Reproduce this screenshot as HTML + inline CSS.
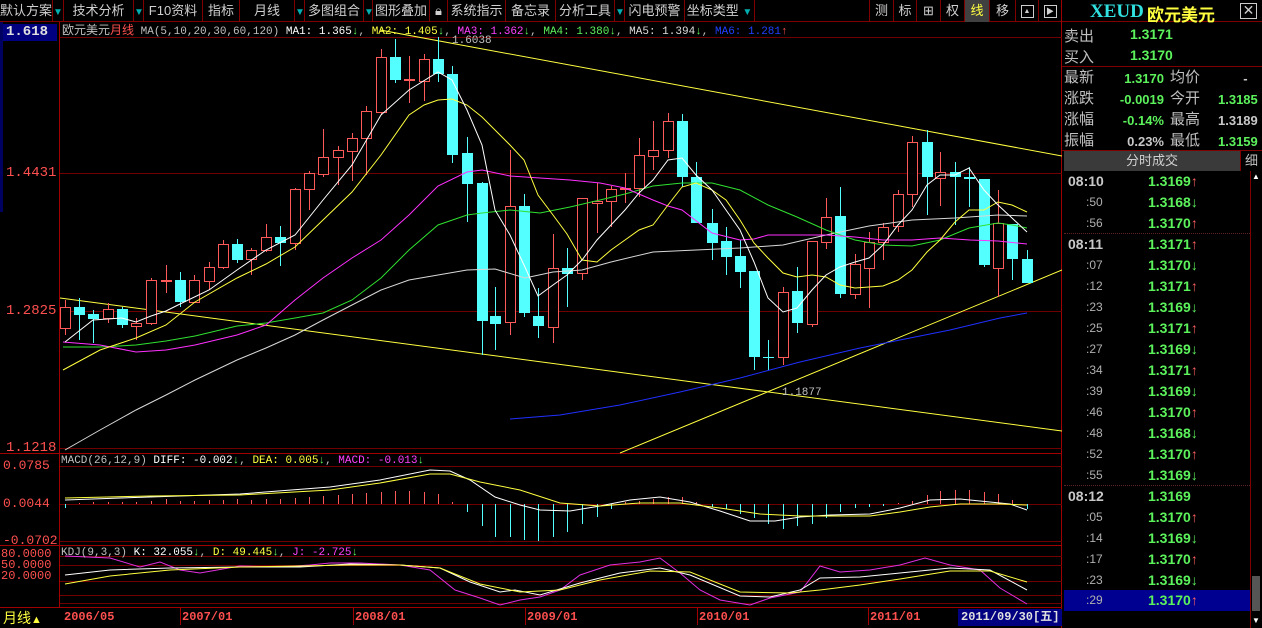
<!DOCTYPE html>
<html><head><meta charset="utf-8"><style>
*{margin:0;padding:0;box-sizing:border-box}
body{width:1262px;height:628px;background:#000;overflow:hidden;position:relative;font-family:"Liberation Sans","Noto Sans CJK SC",sans-serif;color:#c0c0c0}
.a{position:absolute;white-space:nowrap}
.tb{position:absolute;top:0;height:22px;font-size:13px;line-height:22px;color:#d0d0d0;text-align:center;border-right:1px solid #800000}
.tri{color:#00b0b0;font-size:10px}
.m{font-family:"Liberation Mono","Noto Sans CJK SC",monospace}
.g{color:#5cf25c}
.r{color:#ff5050}
.row{position:absolute;left:1064px;width:186px;height:21px;font-size:14px;line-height:21px}
.row .t{position:absolute;left:4px;width:50px;color:#c8c8c8;font-weight:bold}
.row .ts{position:absolute;left:22px;color:#b0b0b0;font-size:12px}
.row .v{position:absolute;left:84px;color:#5cf25c;font-weight:bold;font-size:14px}
.up{color:#ff6060;font-weight:bold}
.dn{color:#5cf25c;font-weight:bold}
</style></head><body>
<!-- toolbar -->
<div class="a" style="left:0;top:0;width:1062px;height:22px;border-bottom:1px solid #800000"></div>
<div class="tb" style="left:0;width:53px">默认方案</div>
<div class="tb" style="left:53px;width:11px"><span class="tri">▼</span></div>
<div class="tb" style="left:64px;width:70px">技术分析</div>
<div class="tb" style="left:134px;width:10px"><span class="tri">▼</span></div>
<div class="tb" style="left:144px;width:59px">F10资料</div>
<div class="tb" style="left:203px;width:37px">指标</div>
<div class="tb" style="left:240px;width:55px">月线</div>
<div class="tb" style="left:295px;width:10px"><span class="tri">▼</span></div>
<div class="tb" style="left:305px;width:59px">多图组合</div>
<div class="tb" style="left:364px;width:9px"><span class="tri">▼</span></div>
<div class="tb" style="left:373px;width:57px">图形叠加</div>
<div class="tb" style="left:430px;width:18px">🔒︎</div>
<div class="tb" style="left:448px;width:58px">系统指示</div>
<div class="tb" style="left:506px;width:50px">备忘录</div>
<div class="tb" style="left:556px;width:59px">分析工具</div>
<div class="tb" style="left:615px;width:10px"><span class="tri">▼</span></div>
<div class="tb" style="left:625px;width:60px">闪电预警</div>
<div class="tb" style="left:685px;width:70px">坐标类型 <span class="tri">▼</span></div>
<div class="tb" style="left:755px;width:115px"></div>
<div class="tb" style="left:870px;width:24px">测</div>
<div class="tb" style="left:894px;width:23px">标</div>
<div class="tb" style="left:917px;width:24px">⊞</div>
<div class="tb" style="left:941px;width:24px">权</div>
<div class="tb" style="left:965px;width:25px;background:#404040;color:#ffff40">线</div>
<div class="tb" style="left:990px;width:26px">移</div>
<div class="tb" style="left:1016px;width:23px"><span style="display:inline-block;width:13px;height:13px;border:1px solid #ccc;vertical-align:middle;font-size:7px;line-height:11px">▲</span></div>
<div class="tb" style="left:1039px;width:23px"><span style="display:inline-block;width:13px;height:13px;border:1px solid #ccc;vertical-align:middle;font-size:8px;line-height:11px">▶</span></div>

<svg class="a" style="left:0;top:0" width="1062" height="628" id="sv">
<rect x="0" y="22" width="3" height="190" fill="#000060"/>
<line x1="59.5" y1="22" x2="59.5" y2="608" stroke="#a00000"/>
<line x1="1061.5" y1="0" x2="1061.5" y2="628" stroke="#a00000"/>
<line x1="0" y1="453.5" x2="1062" y2="453.5" stroke="#a00000"/>
<line x1="0" y1="545.5" x2="1062" y2="545.5" stroke="#a00000"/>
<line x1="0" y1="607.5" x2="1062" y2="607.5" stroke="#a00000"/>
<g stroke="#700000" stroke-width="1">
<line x1="60" y1="37.5" x2="1062" y2="37.5"/>
<line x1="60" y1="173.5" x2="1062" y2="173.5"/>
<line x1="60" y1="311.5" x2="1062" y2="311.5"/>
<line x1="60" y1="448.5" x2="1062" y2="448.5"/>
<line x1="60" y1="466.5" x2="1062" y2="466.5"/>
<line x1="60" y1="504.5" x2="1062" y2="504.5"/>
<line x1="60" y1="541.5" x2="1062" y2="541.5"/>
<line x1="60" y1="556.5" x2="1062" y2="556.5"/>
<line x1="60" y1="565.5" x2="1062" y2="565.5"/>
<line x1="60" y1="581.5" x2="1062" y2="581.5"/>
<line x1="60" y1="595.5" x2="1062" y2="595.5"/>
<line x1="60" y1="603.5" x2="1062" y2="603.5"/>
</g>
<g stroke="#ffff40" stroke-width="1" fill="none">
<line x1="380" y1="30" x2="1062" y2="156"/>
<line x1="60" y1="298" x2="1062" y2="431"/>
<line x1="620" y1="453" x2="1062" y2="270"/>
</g>
<g id="cand"></g>
<g id="lines" fill="none" stroke-width="1"></g>
</svg>

<!-- axis labels -->
<div class="a m" style="left:3px;top:24px;width:54px;height:17px;background:#000080;color:#e0e0e0;font-size:14px;line-height:17px;padding-left:3px;font-weight:bold">1.618</div>
<div class="a m r" style="left:6px;top:165px;font-size:14px">1.4431</div>
<div class="a m r" style="left:6px;top:303px;font-size:14px">1.2825</div>
<div class="a m r" style="left:6px;top:440px;font-size:14px">1.1218</div>
<div class="a m r" style="left:3px;top:458px;font-size:13px">0.0785</div>
<div class="a m r" style="left:3px;top:496px;font-size:13px">0.0044</div>
<div class="a m r" style="left:3px;top:533px;font-size:13px">-0.0702</div>
<div class="a m r" style="left:1px;top:549px;font-size:12px;line-height:11px">80.0000<br>50.0000<br>20.0000</div>
<div class="a" style="left:3px;top:608px;font-size:14px;color:#ffff40">月线<span style="font-size:11px">▲</span></div>
<div class="a m r" style="left:64px;top:610px;font-size:12px;font-weight:bold">2006/05</div>
<div class="a m r" style="left:182px;top:610px;font-size:12px;font-weight:bold">2007/01</div>
<div class="a m r" style="left:355px;top:610px;font-size:12px;font-weight:bold">2008/01</div>
<div class="a m r" style="left:527px;top:610px;font-size:12px;font-weight:bold">2009/01</div>
<div class="a m r" style="left:699px;top:610px;font-size:12px;font-weight:bold">2010/01</div>
<div class="a m r" style="left:870px;top:610px;font-size:12px;font-weight:bold">2011/01</div>
<div class="a m" style="left:958px;top:609px;width:104px;height:17px;background:#000080;color:#e0e0e0;font-size:12px;font-weight:bold;line-height:17px;padding-left:3px">2011/09/30[五]</div>
<div class="a" style="left:180px;top:608px;width:1px;height:17px;background:#a00000"></div>
<div class="a" style="left:353px;top:608px;width:1px;height:17px;background:#a00000"></div>
<div class="a" style="left:525px;top:608px;width:1px;height:17px;background:#a00000"></div>
<div class="a" style="left:697px;top:608px;width:1px;height:17px;background:#a00000"></div>
<div class="a" style="left:868px;top:608px;width:1px;height:17px;background:#a00000"></div>

<!-- chart headers -->
<div class="a m" style="left:62px;top:23px;font-size:11px;line-height:14px"><span style="color:#c0c0c0;font-family:'Liberation Sans','Noto Sans CJK SC',sans-serif;font-size:12px">欧元美元</span><span style="color:#ff5050;font-family:'Liberation Sans','Noto Sans CJK SC',sans-serif;font-size:12px">月线</span> MA(5,10,20,30,60,120) <span style="color:#fff">MA1: 1.365</span><span class="g">↓</span>, <span style="color:#ffff40">MA2: 1.405</span><span class="g">↓</span>, <span style="color:#ff40ff">MA3: 1.362</span><span class="g">↓</span>, <span class="g">MA4: 1.380↓</span>, <span style="color:#ddd">MA5: 1.394</span><span class="g">↓</span>, <span style="color:#2040ff">MA6: 1.281</span><span class="r">↑</span></div>
<div class="a m" style="left:452px;top:35px;font-size:11px;color:#c0c0c0">1.6038</div>
<div class="a m" style="left:782px;top:387px;font-size:11px;color:#c0c0c0">1.1877</div>
<div class="a m" style="left:61px;top:455px;font-size:11px;color:#c0c0c0">MACD(26,12,9) <span style="color:#fff">DIFF: -0.002</span><span class="g">↓</span>, <span style="color:#ffff40">DEA: 0.005</span><span class="g">↓</span>, <span style="color:#ff40ff">MACD: -0.013</span><span class="g">↓</span></div>
<div class="a m" style="left:61px;top:547px;font-size:11px;color:#c0c0c0">KDJ(9,3,3) <span style="color:#fff">K: 32.055</span><span class="g">↓</span>, <span style="color:#ffff40">D: 49.445</span><span class="g">↓</span>, <span style="color:#ff40ff">J: -2.725</span><span class="g">↓</span></div>

<!-- right panel -->
<div class="a" style="left:1062px;top:0;width:200px;height:22px;border-bottom:1px solid #800000"></div>
<div class="a" style="left:1090px;top:1px;font-size:19px;font-weight:bold;font-family:'Liberation Serif',serif;color:#30e0e0">XEUD</div>
<div class="a" style="left:1147px;top:1px;font-size:17px;font-weight:bold;color:#ffff40">欧元美元</div>
<div class="a" style="left:1240px;top:3px;width:17px;height:16px;border:1px solid #ccc;color:#ccc;font-size:14px;line-height:13px;text-align:center">✕</div>
<div class="a" style="left:1064px;top:25px;font-size:15px">卖出</div>
<div class="a" style="left:1130px;top:26px;font-size:14px;font-weight:bold" ><span class="g">1.3171</span></div>
<div class="a" style="left:1064px;top:46px;font-size:15px">买入</div>
<div class="a" style="left:1130px;top:47px;font-size:14px;font-weight:bold"><span class="g">1.3170</span></div>
<div class="a" style="left:1062px;top:66px;width:200px;height:1px;background:#800000"></div>
<div class="a" style="left:1064px;top:67px;font-size:15px;line-height:21px">最新<br>涨跌<br>涨幅<br>振幅</div>
<div class="a" style="left:1170px;top:67px;font-size:15px;line-height:21px">均价<br>今开<br>最高<br>最低</div>
<div class="a" style="left:1094px;top:68px;width:70px;text-align:right;font-size:13px;line-height:21px;font-weight:bold"><span class="g">1.3170</span><br><span class="g">-0.0019</span><br><span class="g">-0.14%</span><br><span style="color:#c8c8c8">0.23%</span></div>
<div class="a" style="left:1218px;top:68px;font-size:13px;line-height:21px;font-weight:bold"><span style="color:#c8c8c8">&nbsp; &nbsp; &nbsp; &nbsp;-</span><br><span class="g">1.3185</span><br><span style="color:#c8c8c8">1.3189</span><br><span class="g">1.3159</span></div>
<div class="a" style="left:1062px;top:150px;width:200px;height:1px;background:#800000"></div>
<div class="a" style="left:1064px;top:151px;width:176px;height:20px;background:#3a3a3a;font-size:13px;line-height:20px;text-align:center;color:#d0d0d0">分时成交</div>
<div class="a" style="left:1240px;top:151px;width:22px;height:20px;border-left:1px solid #800000;font-size:13px;line-height:20px;text-align:center">细</div>
<div class="a" style="left:1250px;top:171px;width:1px;height:457px;background:#800000"></div>
<div class="a" style="left:1252px;top:172px;width:9px;height:10px;color:#fff;font-size:8px;line-height:10px">▲</div>
<div class="a" style="left:1252px;top:576px;width:8px;height:35px;background:#555"></div>
<div class="a" style="left:1252px;top:616px;width:9px;height:10px;color:#fff;font-size:8px;line-height:10px">▼</div>
<div class="a" style="left:1064px;top:233px;width:186px;border-top:1px dotted #602020"></div>
<div class="a" style="left:1064px;top:485px;width:186px;border-top:1px dotted #602020"></div>
<div class="a" style="left:1064px;top:590px;width:186px;height:21px;background:#000090"></div>
<div id="list"></div>

<script>
var C=[[65,'r',307,328,300,335],[79,'c',307,315,298,340],[93,'c',314,319,310,343],[108,'r',309,318,303,323],[122,'c',309,325,307,328],[136,'r',323,326,318,340],[151,'r',280,323,278,325],[166,'r',280,281,265,293],[180,'c',280,302,272,307],[194,'r',280,302,275,303],[209,'r',267,281,262,290],[223,'r',244,267,240,269],[237,'c',244,260,239,263],[251,'r',250,259,248,275],[266,'r',237,250,224,252],[280,'c',237,243,226,266],[295,'r',189,243,188,250],[309,'r',173,189,171,210],[323,'r',157,174,129,177],[338,'r',150,157,146,185],[352,'r',138,151,133,181],[366,'r',111,138,106,175],[381,'r',57,112,49,115],[395,'c',57,80,39,83],[409,'r',79,80,56,103],[424,'r',59,81,54,101],[438,'c',59,74,37,82],[452,'c',74,155,66,163],[467,'c',153,184,137,222],[482,'c',183,321,182,355],[495,'c',316,324,287,350],[510,'r',206,322,150,335],[524,'c',206,313,194,317],[538,'c',316,326,288,338],[553,'r',268,327,234,343],
[567,'c',268,274,248,307],[582,'r',198,273,198,280],[597,'r',201,203,183,233],[611,'r',189,201,186,227],[625,'r',188,189,173,203],[639,'r',155,188,138,197],[653,'r',150,156,121,170],[668,'r',121,150,113,158],[682,'c',121,177,114,187],[696,'c',177,223,162,223],[712,'c',223,243,209,260],[726,'c',241,257,227,275],[740,'c',256,272,240,288],[754,'c',271,357,271,370],[768,'c',357,358,340,370],[783,'r',292,357,287,365],[797,'c',291,323,267,333],[812,'r',241,324,241,327],[826,'r',217,242,198,249],[840,'c',216,294,187,298],[855,'r',264,294,254,299],[869,'r',242,268,232,308],[883,'r',227,242,223,260],[898,'r',194,226,190,232],[912,'r',142,194,136,207],[927,'c',142,177,130,215],[940,'r',172,178,152,206],[955,'c',172,177,162,225],[969,'c',177,179,167,207],[984,'c',179,265,179,267],[998,'r',223,268,190,297],[1012,'c',224,259,224,280],[1027,'c',259,283,250,283]];
var M=[4,-1,-2,-2,-2,-2,-3,-5,-3,-3,-4,-4,-5,-4,-5,-5,-6,-7,-8,-9,-10,-11,-12,-13,-13,-12,-10,-2,8,22,33,33,36,37,33,28,20,13,5,-2,-3,-5,-7,-7,-2,3,5,10,14,20,25,22,20,14,8,4,3,2,-1,-3,-9,-13,-14,-14,-12,-10,-4,5];
var RED='#ff5a5a',CY='#54ffff',s='';
C.forEach(function(c,i){var x=c[0],col=c[1]=='r'?RED:CY;
s+='<line x1="'+(x+.5)+'" y1="'+c[4]+'" x2="'+(x+.5)+'" y2="'+c[5]+'" stroke="'+col+'"/>';
var h=Math.max(1,c[3]-c[2]);
if(c[1]=='r')s+='<rect x="'+(x-5+.5)+'" y="'+(c[2]+.5)+'" width="10" height="'+h+'" fill="#000" stroke="'+RED+'"/>';
else s+='<rect x="'+(x-5)+'" y="'+c[2]+'" width="11" height="'+h+'" fill="'+CY+'"/>';
var v=M[i];if(v!==undefined){s+='<line x1="'+(x+.5)+'" y1="504" x2="'+(x+.5)+'" y2="'+(504+v)+'" stroke="'+(v<0?RED:CY)+'"/>';}
});
document.getElementById('cand').innerHTML=s;
function pl(p,c){return '<polyline points="'+p+'" stroke="'+c+'"/>';}
var L='';
L+=pl('65,450 100,430 136,410 166,395 195,380 237,360 266,348 295,335 323,320 352,305 381,290 409,280 438,275 467,270 495,269 525,278 553,272 582,270 611,262 653,252 696,250 740,248 783,245 826,235 869,226 912,220 955,218 998,215 1027,216','#d8d8d8');
L+=pl('510,419 560,415 620,405 680,392 740,378 800,362 860,348 900,340 950,330 1000,318 1027,313','#2030ff');
L+=pl('63,347 100,347 136,345 166,341 195,336 237,326 266,323 295,318 323,313 352,300 381,278 409,250 438,225 467,215 482,213 510,210 540,213 570,207 600,200 625,194 653,186 682,183 712,183 740,190 768,205 797,217 826,230 855,240 883,245 912,246 940,240 969,228 998,223 1012,225 1027,228','#30e030');
L+=pl('63,342 100,345 136,352 166,350 195,345 237,335 266,325 295,300 323,278 352,258 381,240 409,215 438,186 467,172 482,170 510,176 540,178 570,180 600,183 625,188 653,200 668,206 682,210 712,233 740,240 754,239 768,235 797,235 826,235 855,237 883,240 912,240 940,238 970,240 998,241 1027,244','#ff30ff');
L+=pl('63,370 100,350 136,338 166,325 195,302 237,278 266,264 295,247 323,220 352,192 381,155 409,115 424,105 438,100 452,99 467,105 482,117 510,145 524,160 538,195 553,215 567,234 582,260 597,262 611,250 625,240 639,230 653,225 668,205 682,187 696,183 712,190 726,200 740,220 754,243 768,258 783,273 797,277 812,275 826,277 840,285 855,288 869,287 883,286 898,280 912,270 927,252 940,240 955,222 969,210 984,210 998,202 1012,205 1027,212','#ffff40');
L+=pl('65,342 93,320 122,318 136,322 151,316 166,311 180,304 209,290 237,270 266,250 295,235 323,200 352,165 381,115 409,90 438,72 452,80 467,110 482,145 495,210 510,235 524,265 538,296 553,285 567,275 582,260 597,240 611,225 625,210 639,193 653,180 668,160 682,158 696,175 712,190 726,210 740,230 754,262 768,298 783,312 797,308 812,290 826,275 840,267 855,262 869,258 883,245 898,225 912,210 927,185 940,175 955,175 969,168 984,190 998,205 1012,218 1027,232','#ffffff');
L+=pl('65,500 150,497 240,494 330,487 380,480 430,470 450,471 470,480 495,497 520,505 540,510 570,511 600,506 630,500 660,497 690,502 720,511 750,521 775,521 800,517 830,515 870,514 900,508 930,500 960,499 990,502 1010,504 1027,510','#ffffff');
L+=pl('65,498 150,496 240,495 330,490 380,483 430,474 450,474 480,482 520,490 560,503 600,506 640,503 680,503 720,508 760,514 800,516 840,516 870,516 900,512 930,507 960,504 1000,504 1027,505','#ffff40');
L+=pl('65,556 110,558 140,567 160,562 180,570 200,573 240,566 280,567 310,565 330,563 360,563 400,565 430,570 455,590 480,598 500,605 520,600 540,597 560,590 580,575 610,565 640,562 660,558 680,573 700,590 720,600 750,605 770,598 800,592 820,566 840,572 870,570 900,565 925,558 950,565 980,570 1000,588 1027,604','#e030e0');
L+=pl('65,575 110,570 170,568 240,567 300,567 350,564 400,565 440,568 470,582 500,592 515,590 540,595 580,583 620,573 660,568 690,575 740,596 770,597 800,590 820,578 860,577 900,573 950,568 990,570 1027,590','#ffffff');
L+=pl('65,584 110,576 170,570 240,567 300,566 350,565 400,565 440,568 480,584 520,592 560,590 600,580 650,571 690,572 740,592 790,593 820,590 860,585 900,579 950,571 990,571 1027,582','#ffff40');
document.getElementById('lines').innerHTML=L;
</script>
<div class="row" style="top:171px"><span class="t">08:10</span><span class="v">1.3169<span class="up">↑</span></span></div>
<div class="row" style="top:192px"><span class="ts">:50</span><span class="v">1.3168<span class="dn">↓</span></span></div>
<div class="row" style="top:213px"><span class="ts">:56</span><span class="v">1.3170<span class="up">↑</span></span></div>
<div class="row" style="top:234px"><span class="t">08:11</span><span class="v">1.3171<span class="up">↑</span></span></div>
<div class="row" style="top:255px"><span class="ts">:07</span><span class="v">1.3170<span class="dn">↓</span></span></div>
<div class="row" style="top:276px"><span class="ts">:12</span><span class="v">1.3171<span class="up">↑</span></span></div>
<div class="row" style="top:297px"><span class="ts">:23</span><span class="v">1.3169<span class="dn">↓</span></span></div>
<div class="row" style="top:318px"><span class="ts">:25</span><span class="v">1.3171<span class="up">↑</span></span></div>
<div class="row" style="top:339px"><span class="ts">:27</span><span class="v">1.3169<span class="dn">↓</span></span></div>
<div class="row" style="top:360px"><span class="ts">:34</span><span class="v">1.3171<span class="up">↑</span></span></div>
<div class="row" style="top:381px"><span class="ts">:39</span><span class="v">1.3169<span class="dn">↓</span></span></div>
<div class="row" style="top:402px"><span class="ts">:46</span><span class="v">1.3170<span class="up">↑</span></span></div>
<div class="row" style="top:423px"><span class="ts">:48</span><span class="v">1.3168<span class="dn">↓</span></span></div>
<div class="row" style="top:444px"><span class="ts">:52</span><span class="v">1.3170<span class="up">↑</span></span></div>
<div class="row" style="top:465px"><span class="ts">:55</span><span class="v">1.3169<span class="dn">↓</span></span></div>
<div class="row" style="top:486px"><span class="t">08:12</span><span class="v">1.3169</span></div>
<div class="row" style="top:507px"><span class="ts">:05</span><span class="v">1.3170<span class="up">↑</span></span></div>
<div class="row" style="top:528px"><span class="ts">:14</span><span class="v">1.3169<span class="dn">↓</span></span></div>
<div class="row" style="top:549px"><span class="ts">:17</span><span class="v">1.3170<span class="up">↑</span></span></div>
<div class="row" style="top:570px"><span class="ts">:23</span><span class="v">1.3169<span class="dn">↓</span></span></div>
<div class="row" style="top:590px"><span class="ts">:29</span><span class="v">1.3170<span class="up">↑</span></span></div>
</body></html>
